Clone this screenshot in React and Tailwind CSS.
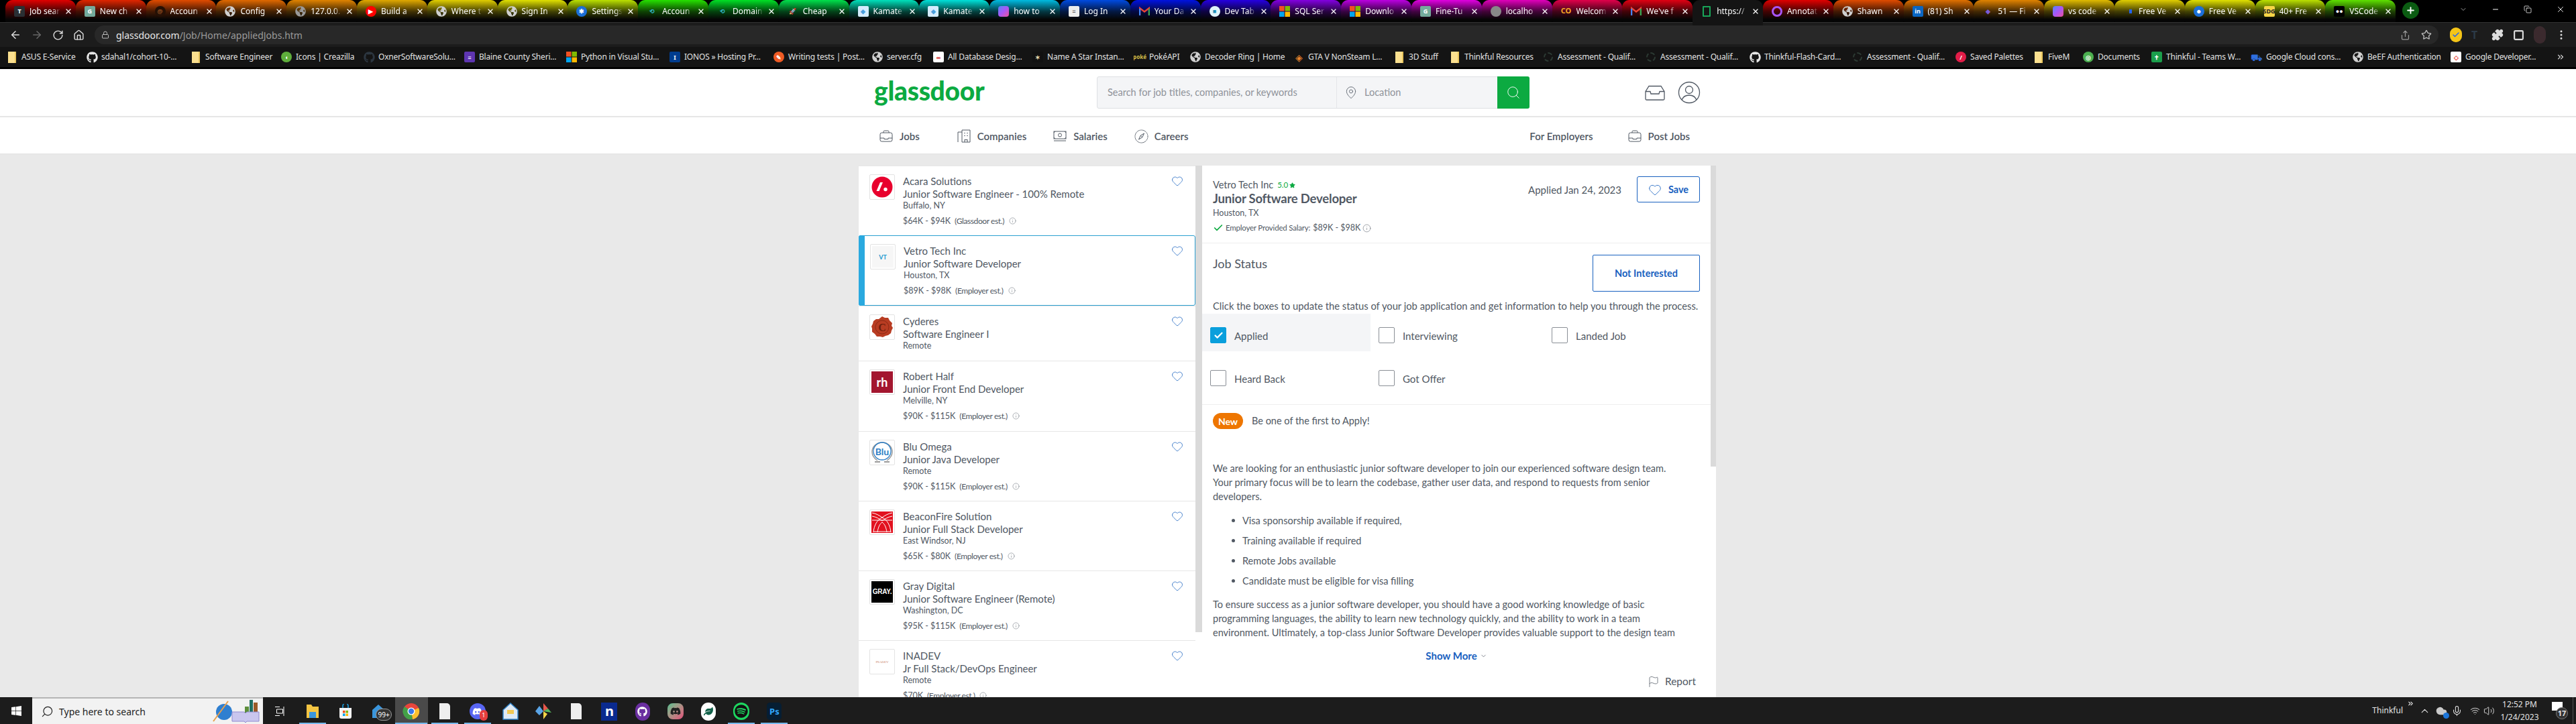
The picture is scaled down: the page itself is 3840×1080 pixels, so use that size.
import React from "react";
import { ArrowLeft, ArrowRight, RotateCw, House, Lock, Star, Share, Puzzle, EllipsisVertical, Search, MapPin, Heart, Info, Check, ChevronDown, ChevronUp, Flag, Mic, Wifi, Volume2, Plus, Minus, X, Copy, ChevronsRight, Square, Cloud } from "lucide-react";
import { FaGithub, FaGlobeAmericas, FaWindows, FaDiscord, FaSpotify, FaLeaf } from "react-icons/fa";

const Ms = () => (
  <svg width="16" height="16" viewBox="0 0 16 16"><rect width="7.5" height="7.5" fill="#f25022" /><rect x="8.5" width="7.5" height="7.5" fill="#7fba00" /><rect y="8.5" width="7.5" height="7.5" fill="#00a4ef" /><rect x="8.5" y="8.5" width="7.5" height="7.5" fill="#ffb900" /></svg>
);
const Gmail = () => (
  <svg width="16" height="16" viewBox="0 0 16 16"><path d="M1 14V3l7 5.5L15 3v11" fill="none" stroke="#ea4335" strokeWidth="2.4" /><path d="M1 14V4" stroke="#4285f4" strokeWidth="2.4" /><path d="M15 14V4" stroke="#34a853" strokeWidth="2.4" /></svg>
);
const Disk = ({ c, t, tc = "#fff" }) => (
  <span className="flex items-center justify-center w-[16px] h-[16px] rounded-full text-[9px] font-bold leading-none" style={{ background: c, color: tc }}>{t}</span>
);
const Sq = ({ c, t, tc = "#fff" }) => (
  <span className="flex items-center justify-center w-[16px] h-[16px] rounded-[2px] text-[9px] font-bold leading-none" style={{ background: c, color: tc }}>{t}</span>
);
const Globe = () => <FaGlobeAmericas size={16} color="#cfcfcf" />;
const Folder = () => <span className="block w-[12px] h-[17px] bg-[#fbe08f] border-r-2 border-[#e8c45c]" />;
const Git = () => <FaGithub size={17} color="#e6e6e6" />;
const Dim = () => <span className="block w-[14px] h-[14px] rounded-full border-2 border-dashed border-[#2c3a33]" />;
const Grad = () => <span className="block w-[16px] h-[16px] rounded-[4px] bg-gradient-to-br from-[#3b82f6] via-[#a855f7] to-[#ec4899]" />;

const tabs = [
  ["Job sear", 0, <Sq c="#2a2f33" t="T" />], ["New ch", 10, <Sq c="#74aa9c" t="G" />], ["Accoun", 20, <Disk c="#251005" t="@" tc="#8a4a20" />], ["Config", 28, <Globe />],
  ["127.0.0.", 35, <FaGlobeAmericas size={16} color="#999" />], ["Build a", 45, <Disk c="#ff0000" t="▶" />], ["Where t", 55, <Globe />], ["Sign In", 60, <Globe />],
  ["Settings", 70, <Disk c="#1b6fd8" t="✱" />], ["Accoun", 110, <Disk c="transparent" t="⟲" tc="#35b4c8" />], ["Domain", 130, <Disk c="transparent" t="⟲" tc="#35b4c8" />], ["Cheap", 140, <Disk c="transparent" t="🚀" />],
  ["Kamate", 170, <Sq c="#d4ecff" t="◆" tc="#4a9fdc" />], ["Kamate", 178, <Sq c="#d4ecff" t="◆" tc="#4a9fdc" />], ["how to", 190, <Grad />], ["Log In", 220, <Sq c="#eee" t="≡" tc="#555" />],
  ["Your Da", 235, <Gmail />], ["Dev Tab", 250, <Disk c="#dff4fb" t="■" tc="#1d8fb8" />], ["SQL Ser", 275, <Ms />], ["Downlo", 290, <Ms />],
  ["Fine-Tu", 300, <Sq c="#74aa9c" t="G" />], ["localho", 310, <Disk c="#888" t="" />], ["Welcom", 340, <span className="text-[11px] font-bold text-[#f9a825]">CO</span>], ["We've f", 355, <Gmail />],
  ["https://", null, <span className="block w-[12px] h-[16px] border-2 border-[#18a558] rounded-[1px]" />],
  ["Annotat", 0, <span className="block w-[16px] h-[16px] rounded-full border-[3px] border-[#a855f7]" />], ["Shawn", 20, <Globe />], ["(81) Sh", 30, <Sq c="#0a66c2" t="in" />], ["51 — Fi", 35, <Disk c="transparent" t="◆" tc="#7c5cd6" />],
  ["vs code", 50, <Grad />], ["Free Ve", 55, <span className="block w-[4px] h-[6px] bg-[#2563eb] ml-[6px]" />], ["Free Ve", 60, <Disk c="#1b6fd8" t="☻" />], ["40+ Fre", 70, <Sq c="#f5d547" t="SDG" tc="#222" />], ["VSCode", 95, <Sq c="#000" t="●●" />],
];

const bookmarks = [
  ["ASUS E-Service", 119, <Folder />], ["sdahal1/cohort-10-...", 155, <Git />], ["Software Engineer", 135, <Folder />], ["Icons | Creazilla", 123, <Disk c="#5fae3c" t="◖" />],
  ["OxnerSoftwareSolu...", 150, <FaGithub size={17} color="#2c3640" />], ["Blaine County Sheri...", 152, <Sq c="#5e35b1" t="≡" />], ["Python in Visual Stu...", 154, <Ms />], ["IONOS » Hosting Pr...", 155, <Sq c="#003d8f" t="I" />],
  ["Writing tests | Post...", 147, <Disk c="#ef5b25" t="✎" />], ["server.cfg", 91, <Globe />], ["All Database Desig...", 148, <Sq c="#fff" t="∞" tc="#c00" />], ["Name A Star Instan...", 152, <Sq c="#111" t="✶" tc="#e8dcb0" />],
  ["PokéAPI", 83, <span className="text-[8px] font-bold text-[#d6c04a]">poké</span>], ["Decoder Ring | Home", 154, <Globe />], ["GTA V NonSteam L...", 150, <span className="text-[14px] text-[#e8842c]">◈</span>], ["3D Stuff", 83, <Folder />],
  ["Thinkful Resources", 139, <Folder />], ["Assessment - Qualif...", 153, <Dim />], ["Assessment - Qualif...", 155, <Dim />], ["Thinkful-Flash-Card...", 153, <Git />],
  ["Assessment - Qualif...", 154, <Dim />], ["Saved Palettes", 116, <Disk c="#e11d48" t="/" />], ["FiveM", 74, <Folder />], ["Documents", 102, <Disk c="#4caf50" t="◎" />],
  ["Thinkful - Teams W...", 149, <Sq c="#1b9e4b" t="✝" />], ["Google Cloud cons...", 151, <span className="text-[14px] text-[#2f6fe0]">⛟</span>], ["BeEF Authentication", 146, <Globe />], ["Google Developer...", 140, <Sq c="#fff" t="◇" tc="#ea4335" />],
];

const IconStroke = { fill: "none", stroke: "#505863", strokeWidth: 1 };

const JobsIcon = () => (
  <svg width="20" height="20" viewBox="0 0 20 20" {...IconStroke}><rect x="1" y="5" width="18" height="13" rx="2.5" /><path d="M6 5V3.5A1.5 1.5 0 0 1 7.5 2h5A1.5 1.5 0 0 1 14 3.500V5M1 13h6v1.500h6V13h6" /></svg>
);
const CompaniesIcon = () => (
  <svg width="21" height="20" viewBox="0 0 21 20" {...IconStroke}><path d="M7 4H1v15M7 1h12v18H7zM11 16v3M15 16v3M10.500 15.500h5" /><path d="M11 5v1M15 5v1M11 9v1M15 9v1" strokeWidth="1.600" /></svg>
);
const SalariesIcon = () => (
  <svg width="20" height="18" viewBox="0 0 20 18" {...IconStroke}><rect x="1" y="2" width="18" height="11" /><circle cx="10" cy="7.500" r="2.500" /><path d="M1 16h18M3 2 1 4M17 2l2 2M1 11l2 2M19 11l-2 2" /></svg>
);
const CareersIcon = () => (
  <svg width="21" height="21" viewBox="0 0 21 21" {...IconStroke}><circle cx="10.500" cy="10.500" r="9.500" strokeDasharray="1.800 .5" /><path d="M14.500 6 11.800 11.800 6.500 15 9.200 9.200zM9.200 9.200l2.600 2.600" /></svg>
);

const jobs = [
  { co: "Acara Solutions", t: "Junior Software Engineer - 100% Remote", loc: "Buffalo, NY", sal: "$64K - $94K", est: "(Glassdoor est.)", h: "h-[104px]", logo: (
    <svg width="32" height="32" viewBox="0 0 32 32"><circle cx="16" cy="16" r="15.500" fill="#e8002d" /><path d="M7.500 22 13 9h4l-5.500 13z" fill="#fff" /><circle cx="21" cy="19.500" r="2.700" fill="#fff" /></svg>
  ) },
  { co: "Vetro Tech Inc", t: "Junior Software Developer", loc: "Houston, TX", sal: "$89K - $98K", est: "(Employer est.)", sel: true, h: "h-[105px]", logo: (
    <span className="flex flex-col items-center justify-center w-[32px] h-[32px] bg-[#f6f6f6]"><span className="text-[9px] leading-none font-bold text-[#1d9ad0]">VT</span></span>
  ) },
  { co: "Cyderes", t: "Software Engineer I", loc: "Remote", h: "h-[82px]", logo: (
    <svg width="32" height="32" viewBox="0 0 32 32"><path d="M16 0l4 2 5 0 2 4 4 4-1 4 2 3-2 4-1 4-4 3-4 1-4 2-4-1-5 0-3-4-4-3 0-5-1-3 2-4 1-4 4-3 4 0z" fill="#b83c22" /><circle cx="16" cy="16" r="10" fill="none" stroke="#8e2a14" strokeWidth="1" /><text x="16" y="22" textAnchor="middle" fontSize="16" fontWeight="700" fill="#6e1e0c" fontFamily="Liberation Serif, serif">C</text></svg>
  ) },
  { co: "Robert Half", t: "Junior Front End Developer", loc: "Melville, NY", sal: "$90K - $115K", est: "(Employer est.)", h: "h-[105px]", logo: (
    <span className="flex items-center justify-center w-[32px] h-[32px] bg-[#a3162f] text-white text-[18px] font-bold leading-none">rh</span>
  ) },
  { co: "Blu Omega", t: "Junior Java Developer", loc: "Remote", sal: "$90K - $115K", est: "(Employer est.)", h: "h-[104px]", logo: (
    <svg width="32" height="32" viewBox="0 0 32 32"><path d="M9 28C3 24 1 19 1 15a15 14 0 0 1 30 0c0 4-2 9-8 13" fill="none" stroke="#9a9a9a" strokeWidth="1.500" /><path d="M5 30h8M19 30h8" stroke="#9a9a9a" strokeWidth="2" /><circle cx="16" cy="14" r="13" fill="none" stroke="#2d7fc6" strokeWidth="1.300" /><text x="16" y="20" textAnchor="middle" fontSize="14" fontWeight="700" fill="#2d7fc6" fontFamily="Lato, sans-serif">Blu</text></svg>
  ) },
  { co: "BeaconFire Solution", t: "Junior Full Stack Developer", loc: "East Windsor, NJ", sal: "$65K - $80K", est: "(Employer est.)", h: "h-[104px]", logo: (
    <svg width="32" height="32" viewBox="0 0 32 32"><rect width="32" height="32" fill="#e2121f" /><path d="M1 2c6 1 11 4 15 7 4-3 9-6 15-7M1 7c6 1 11 4 15 7 4-3 9-6 15-7M1 13h30M3 31C4 20 9 12 16 9c7 3 12 11 13 22M9 31c1-7 3-12 7-15 4 3 6 8 7 15M3 30h26" fill="none" stroke="#fff" strokeWidth="1" /></svg>
  ) },
  { co: "Gray Digital", t: "Junior Software Engineer (Remote)", loc: "Washington, DC", sal: "$95K - $115K", est: "(Employer est.)", h: "h-[104px]", logo: (
    <span className="flex items-center justify-center w-[32px] h-[32px] bg-black text-white text-[10px] font-black leading-none font-['Liberation_Sans',sans-serif] tracking-tight">GRAY.</span>
  ) },
  { co: "INADEV", t: "Jr Full Stack/DevOps Engineer", loc: "Remote", sal: "$70K", est: "(Employer est.)", h: "h-[104px]", logo: (
    <span className="flex items-center justify-center w-[32px] h-[32px] bg-white text-[#c9806a] text-[5px] leading-none font-['Liberation_Serif',serif]">INADEV</span>
  ) },
];

function JobCard({ j }) {
  return (
    <div className={`relative flex shrink-0 ${j.h} ${j.sel ? "border border-[#2b9fd0] rounded-[3px] pl-[16px] pr-[17px]" : "border-t border-[#e6e6e6] pl-[16px] pr-[18px]"}`}>
      {j.sel && <span className="absolute left-[-1px] top-[-1px] bottom-[-1px] w-[9px] bg-[#2aa9df] rounded-l-[3px]" />}
      <div className="flex w-full pt-[12px]">
        <div className="w-[38px] h-[38px] shrink-0 border border-[#e3e3e3] rounded-[2px] flex items-center justify-center bg-white">{j.logo}</div>
        <div className="ml-[12px] flex-1 pt-[1px] text-[#505863]">
          <div className="text-[15px] leading-[19px] whitespace-nowrap">{j.co}</div>
          <div className="text-[15px] leading-[19px] whitespace-nowrap">{j.t}</div>
          <div className="text-[12.500px] leading-[16px] whitespace-nowrap">{j.loc}</div>
          {j.sal && (
            <div className="flex items-center mt-[6px] text-[12.500px] leading-[17px] whitespace-nowrap">
              <span>{j.sal}</span>
              <span className="ml-[6px] text-[12px] tracking-[-0.4px]">{j.est}</span>
              <Info size={11} strokeWidth={1} className="ml-[7px]" />
            </div>
          )}
        </div>
        <Heart size={18} strokeWidth={1} color="#1861bf" className="shrink-0 mt-[1px]" />
      </div>
    </div>
  );
}

const Box = ({ on, label }) => (
  <div className="flex items-start pl-[12px] pt-[20px] gap-[12px]">
    <span className={`flex items-center justify-center w-[24px] h-[24px] rounded-[2px] border ${on ? "bg-[#0a9fdc] border-[#0a9fdc]" : "bg-white border-[#8a8f96]"}`}>
      {on && <Check size={15} strokeWidth={3.500} color="#fff" />}
    </span>
    <span className="text-[15px] leading-[26px] text-[#505863]">{label}</span>
  </div>
);

const Bullet = ({ children }) => (
  <li className="flex items-center h-[21px] pl-[28px]">
    <span className="w-[5px] h-[5px] rounded-full bg-[#505863] mr-[11px]" />
    {children}
  </li>
);

function Tab({ t }) {
  const [text, hue, icon] = t;
  const active = hue === null;
  return (
    <div
      className={`relative flex items-center shrink-0 w-[104.800px] rounded-t-[11px] ${active ? "h-[38px] rounded-b-none bg-[#141414] pb-[5px]" : "h-[33px] rounded-b-[2px]"}`}
      style={active ? undefined : { background: `linear-gradient(to bottom, hsl(${hue} 100% 44%) 0px, hsl(${hue} 90% 14%) 17px, #050505 29px)` }}
    >
      <span className="w-[36px] flex items-center justify-center shrink-0 pl-[6px]">{icon}</span>
      <span className="w-[46px] overflow-hidden whitespace-nowrap text-[12px] text-white [mask-image:linear-gradient(90deg,#000_75%,transparent)]">{text}</span>
      <X size={12} strokeWidth={2.500} color="#fff" className="ml-[6px]" />
    </div>
  );
}

const BarIcon = ({ active, under, children }) => (
  <div className={`flex flex-col items-center justify-between w-[49.200px] h-full pt-[8px] ${active ? "bg-[#4a4a4a]" : ""}`}>
    <span className="flex items-center justify-center h-[26px]">{children}</span>
    <span className={`h-[2px] ${active ? "w-[48px]" : "w-[40px]"} ${under || active ? "bg-[#76b9ed]" : ""}`} />
  </div>
);

export default function App() {
  return (
    <div className="flex flex-col w-[3840px] h-[1080px] overflow-hidden bg-[#e9e9e9] font-['Lato',sans-serif]">
      {/* browser chrome */}
      <div className="flex items-start h-[34px] bg-black pl-[8px] border-b border-[#333] font-['Noto_Sans',sans-serif] shrink-0">
        {tabs.map((t, i) => <Tab key={i} t={t} />)}
        <span className="flex items-center justify-center w-[25px] h-[25px] ml-[10px] mt-[3px] rounded-full bg-[#0b5c12] shrink-0"><Plus size={15} strokeWidth={3} color="#fff" /></span>
        <div className="flex items-center ml-auto h-[28px] pr-[16px] gap-[36px] text-white">
          <ChevronDown size={12} strokeWidth={1.500} color="#ccc" />
          <Minus size={12} strokeWidth={2} />
          <Copy size={12} strokeWidth={1.500} />
          <X size={14} strokeWidth={1.500} />
        </div>
      </div>
      <div className="flex items-center h-[36px] bg-[#1c1c1c] shrink-0 font-['Noto_Sans',sans-serif]">
        <div className="flex items-center w-[141px] pl-[14px] gap-[14px]">
          <ArrowLeft size={18} color="#ddd" />
          <ArrowRight size={18} color="#666" />
          <RotateCw size={17} color="#ddd" />
          <House size={17} color="#ddd" />
        </div>
        <div className="flex items-center w-[3494px] h-[28px] rounded-full bg-[#282828] pl-[10px] pr-[10px]">
          <Lock size={12} color="#bbb" />
          <span className="ml-[10px] text-[14px] text-[#e8e8e8]">glassdoor.com<span className="text-[#9a9a9a]">/Job/Home/appliedJobs.htm</span></span>
          <Share size={15} color="#999" className="ml-auto" />
          <Star size={16} color="#bbb" className="ml-[16px]" />
        </div>
        <div className="flex items-center ml-[17px] gap-[14px]">
          <span className="flex items-center justify-center w-[18px] h-[22px] rounded-full bg-[#f5c518]"><Check size={12} strokeWidth={3} color="#2563eb" /></span>
          <span className="text-[16px] font-bold text-[#2c3a48] w-[16px]">T</span>
          <Puzzle size={18} color="#ddd" fill="#ddd" />
          <Square size={17} strokeWidth={3} color="#ddd" />
          <span className="w-[18px] h-[26px] rounded-full bg-[#3b2a2e]" />
          <EllipsisVertical size={18} color="#ddd" />
        </div>
      </div>
      <div className="flex items-center h-[33px] bg-[#141414] pl-[9px] shrink-0 font-['Noto_Sans',sans-serif] border-b-[3px] border-black">
        {bookmarks.map(([n, w, ic], i) => (
          <div key={i} className="flex items-center shrink-0 overflow-hidden" style={{ width: w }}>
            <span className="w-[18px] flex items-center justify-center shrink-0">{ic}</span>
            <span className="ml-[5px] text-[12px] text-[#e2e2e2] whitespace-nowrap tracking-[-0.2px]">{n}</span>
          </div>
        ))}
        <ChevronsRight size={14} color="#ddd" className="ml-[18px]" />
      </div>

      {/* glassdoor header */}
      <div className="h-[72px] bg-white border-b-2 border-[#e6e6e6] shrink-0">
        <div className="flex items-center w-[1280px] mx-auto h-full pl-[23px]">
          <span className="w-[332px] text-[39px] font-black text-[#0caa41] leading-none tracking-[-0.3px] pb-[6px]">glassdoor</span>
          <div className="flex h-[48px] w-[645px] bg-[#f4f5f7] border border-[#dee0e3] rounded-[3px]">
            <div className="flex items-center w-[357px] pl-[15px] border-r border-[#e4e6e9] text-[14.500px] text-[#8e9299]">Search for job titles, companies, or keywords</div>
            <div className="flex items-center flex-1 pl-[11px] text-[14.500px] text-[#8e9299]">
              <MapPin size={20} strokeWidth={1} color="#505863" />
              <span className="ml-[10px]">Location</span>
            </div>
            <span className="flex items-center justify-center w-[48px] -my-[1px] -mr-[1px] bg-[#0caa41] rounded-r-[3px]"><Search size={22} strokeWidth={1} color="#fff" /></span>
          </div>
          <svg width="32" height="32" viewBox="0 0 32 32" fill="none" stroke="#505863" strokeWidth="1.300" className="ml-[171px]"><path d="M7 6.500h18l5 8v11a1.500 1.500 0 0 1-1.500 1.500h-25A1.500 1.500 0 0 1 2 25.500v-11zM2 14.500h7l1 3.500h12l1-3.500h7" /></svg>
          <svg width="34" height="34" viewBox="0 0 34 34" fill="none" stroke="#505863" strokeWidth="1.300" className="ml-[18px]"><circle cx="17" cy="17" r="15.500" /><circle cx="17" cy="13" r="5.500" /><path d="M6 28c2-5 6-7 11-7s9 2 11 7" /></svg>
        </div>
      </div>
      <div className="h-[55px] bg-white border-b border-[#e2e2e2] shrink-0">
        <div className="flex items-center w-[1280px] mx-auto h-full pl-[31px] pr-[41px] pt-[2px] text-[15px] font-semibold text-[#505863]">
          <JobsIcon /><span className="ml-[10px]">Jobs</span>
          <span className="ml-[56px]"><CompaniesIcon /></span><span className="ml-[9px]">Companies</span>
          <span className="ml-[40px]"><SalariesIcon /></span><span className="ml-[10px]">Salaries</span>
          <span className="ml-[40px]"><CareersIcon /></span><span className="ml-[9px]">Careers</span>
          <span className="ml-auto">For Employers</span>
          <span className="ml-[52px]"><JobsIcon /></span><span className="ml-[10px]">Post Jobs</span>
        </div>
      </div>

      {/* page */}
      <div className="flex-1 min-h-0 overflow-hidden pt-[17px]">
        <div className="flex w-[1280px] h-[800px] mx-auto">
          <div className="flex flex-col w-[502px] shrink-0 bg-white overflow-hidden">
            {jobs.map((j) => <JobCard key={j.co} j={j} />)}
          </div>
          <div className="w-[10px] shrink-0 bg-white"><div className="h-[696px] bg-[#dadada]" /></div>
          <div className="flex flex-col w-[758px] shrink-0 bg-white text-[#505863] overflow-hidden">
            <div className="flex justify-between h-[116px] pl-[16px] pr-[16px] border-b border-[#eeeeee] shrink-0">
              <div className="pt-[20px]">
                <div className="flex items-center h-[18px] text-[14.500px]">Vetro Tech Inc <span className="ml-[6px] text-[11.500px] text-[#0caa41]">5.0</span><Star size={9} fill="#0caa41" color="#0caa41" className="ml-[2px]" /></div>
                <div className="text-[18.500px] leading-[22px] font-bold tracking-[-0.2px]">Junior Software Developer</div>
                <div className="mt-[1px] text-[12.500px] leading-[20px]">Houston, TX</div>
                <div className="flex items-center mt-[2px] h-[20px] text-[11.500px]">
                  <Check size={16} strokeWidth={2.500} color="#0caa41" className="mr-[3px]" />
                  <span className="tracking-[-0.2px]">Employer Provided Salary:</span>
                  <span className="ml-[4px] text-[12.500px]">$89K - $98K</span>
                  <Info size={13} strokeWidth={1} className="ml-[3px]" />
                </div>
              </div>
              <div className="flex items-start pt-[16px]">
                <span className="mt-[10px] text-[15px] leading-[20px]">Applied Jan 24, 2023</span>
                <button className="flex items-center justify-center ml-[23px] w-[94px] h-[39px] border border-[#1861bf] rounded-[3px] text-[#1861bf] text-[14.500px] font-bold"><Heart size={20} strokeWidth={1} className="mr-[10px]" />Save</button>
              </div>
            </div>
            <div className="border-b border-[#eeeeee] pb-[15px] shrink-0">
              <div className="flex items-start justify-between pl-[16px] pr-[16px] pt-[17px]">
                <span className="text-[18px] leading-[26px]">Job Status</span>
                <button className="w-[160px] h-[55px] border border-[#1861bf] rounded-[2px] text-[#1861bf] text-[14.500px] font-bold">Not Interested</button>
              </div>
              <p className="mt-[11px] px-[16px] text-[14.750px] leading-[20px] whitespace-nowrap">Click the boxes to update the status of your job application and get information to help you through the process.</p>
              <div className="grid grid-cols-[251px_258px_1fr] gap-y-[8px] mt-[2px]">
                <div className="h-[56px] bg-[#f4f5f7]"><Box on label="Applied" /></div>
                <div className="h-[56px]"><Box label="Interviewing" /></div>
                <div className="h-[56px]"><Box label="Landed Job" /></div>
                <div className="h-[56px]"><Box label="Heard Back" /></div>
                <div className="h-[56px]"><Box label="Got Offer" /></div>
              </div>
            </div>
            <div className="flex items-center pl-[16px] mt-[12px] h-[24px] shrink-0">
              <span className="flex items-center justify-center w-[45px] h-[24px] rounded-full bg-[#ee7600] text-white text-[14px] font-bold">New</span>
              <span className="ml-[13px] text-[14.500px]">Be one of the first to Apply!</span>
            </div>
            <div className="mt-[48px] px-[16px] text-[14.500px] leading-[21px] shrink-0">
              <p className="whitespace-nowrap">We are looking for an enthusiastic junior software developer to join our experienced software design team.<br />Your primary focus will be to learn the codebase, gather user data, and respond to requests from senior<br />developers.</p>
              <ul className="flex flex-col gap-[9px] mt-[15px]">
                <Bullet>Visa sponsorship available if required,</Bullet>
                <Bullet>Training available if required</Bullet>
                <Bullet>Remote Jobs available</Bullet>
                <Bullet>Candidate must be eligible for visa filling</Bullet>
              </ul>
              <p className="mt-[14px] whitespace-nowrap">To ensure success as a junior software developer, you should have a good working knowledge of basic<br />programming languages, the ability to learn new technology quickly, and the ability to work in a team<br />environment. Ultimately, a top-class Junior Software Developer provides valuable support to the design team</p>
            </div>
            <div className="flex items-center justify-center h-[20px] mt-[14px] text-[15px] font-bold text-[#1861bf] shrink-0">Show More<ChevronDown size={11} strokeWidth={1.500} color="#505863" className="ml-[4px]" /></div>
            <div className="flex items-center justify-end h-[24px] mt-[17px] pr-[22px] text-[15.500px] shrink-0"><Flag size={18} strokeWidth={1} className="mr-[8px]" />Report</div>
          </div>
          <div className="w-[8px] shrink-0 bg-white"><div className="h-[449px] bg-[#dadada]" /></div>
        </div>
      </div>

      {/* taskbar */}
      <div className="flex items-stretch h-[40px] bg-[#1c1c1c] shrink-0 font-['Noto_Sans',sans-serif] text-white">
        <div className="flex items-center justify-center w-[48px]"><FaWindows size={17} color="#fff" /></div>
        <div className="flex items-center w-[344px] bg-[#f2f2f2] border-t-2 border-[#b5b5b5] pl-[13px] overflow-hidden">
          <Search size={19} strokeWidth={1.500} color="#222" className="-scale-x-100" />
          <span className="ml-[8px] text-[14px] text-[#222]">Type here to search</span>
          <svg width="76" height="38" viewBox="0 0 76 38" className="ml-auto">
            <rect x="56" y="2" width="5" height="26" fill="#1f6f63" /><rect x="62" y="6" width="6" height="22" fill="#9a5a28" /><rect x="49" y="12" width="6" height="16" fill="#5d8f3c" />
            <circle cx="18" cy="20" r="12" fill="#2f7fd0" /><path d="M2 34 24 4" stroke="#e8a04c" strokeWidth="2" />
            <path d="M30 20h18l2 2 2-2h18v14H52l-2 2-2-2H30z" fill="#c9c6ee" stroke="#8f8ad0" />
          </svg>
        </div>
        <BarIcon><svg width="16" height="16" viewBox="0 0 16 16" fill="none" stroke="#fff"><path d="M1 1.500h7M1 14.500h7M3.500 5h9v6h-9zM14 1v14" /></svg></BarIcon>
        <BarIcon under><svg width="20" height="22" viewBox="0 0 20 22"><path d="M1 1h7l2 3h9v17H1z" fill="#f4c542" /><rect x="5" y="12" width="10" height="9" fill="#3a96dd" /></svg></BarIcon>
        <BarIcon><svg width="20" height="22" viewBox="0 0 20 22"><path d="M1 6h18v13a3 3 0 0 1-3 3H4a3 3 0 0 1-3-3z" fill="#f5f5f5" /><path d="M6 6V3a4 4 0 0 1 8 0v3" fill="none" stroke="#1aa7ec" strokeWidth="1.500" /><rect x="6" y="10" width="3.500" height="3.500" fill="#f25022" /><rect x="10.500" y="10" width="3.500" height="3.500" fill="#7fba00" /><rect x="6" y="14.500" width="3.500" height="3.500" fill="#00a4ef" /><rect x="10.500" y="14.500" width="3.500" height="3.500" fill="#ffb900" /></svg></BarIcon>
        <BarIcon><span className="relative flex"><svg width="24" height="24" viewBox="0 0 24 24"><path d="M3 10 12 2l9 8v12H3z" fill="#3a96dd" /></svg><span className="absolute -right-[8px] top-[8px] flex items-center justify-center w-[24px] h-[18px] rounded-full bg-[#333] border border-[#999] text-[10px]">99+</span></span></BarIcon>
        <BarIcon active><svg width="26" height="26" viewBox="0 0 26 26"><circle cx="13" cy="13" r="12" fill="#e8453c" /><path d="M13 13 24 8a12 12 0 0 1-9 17z" fill="#fbc02d" /><path d="M13 13 15 25A12 12 0 0 1 3 6z" fill="#43a047" /><circle cx="13" cy="13" r="5.500" fill="#fff" /><circle cx="13" cy="13" r="4.200" fill="#3b78e7" /></svg></BarIcon>
        <BarIcon under><span className="block w-[16px] h-[24px] bg-[#eeeeee] rounded-tr-[5px]" /></BarIcon>
        <BarIcon under><span className="relative flex"><span className="flex items-center justify-center w-[24px] h-[24px] rounded-full bg-[#5865f2]"><FaDiscord size={15} color="#fff" /></span><span className="absolute -right-[3px] top-[10px] flex items-center justify-center w-[12px] h-[16px] rounded-full bg-[#e53e3e] text-[9px]">1</span></span></BarIcon>
        <BarIcon><svg width="26" height="26" viewBox="0 0 26 26" fill="#dfeaf5" stroke="#2f81c7" strokeWidth="1.500"><path d="M13 1 24 11v14H2V11z" /><rect x="8" y="11" width="10" height="6" fill="#f3c955" stroke="none" /></svg></BarIcon>
        <BarIcon><svg width="26" height="26" viewBox="0 0 26 26"><path d="M13 1 20 9 13 13z" fill="#e8574c" /><path d="M20 9 25 15 13 13z" fill="#57b65b" /><path d="M13 25 19 17 13 13z" fill="#f5d547" /><path d="M1 13 7 5 13 13 7 19z" fill="#5aa4e6" /></svg></BarIcon>
        <BarIcon><span className="block w-[16px] h-[24px] bg-[#eeeeee] rounded-tr-[5px]" /></BarIcon>
        <BarIcon><span className="flex items-center justify-center w-[24px] h-[27px] bg-[#0a2a8f] text-white text-[20px] font-bold leading-none">n</span></BarIcon>
        <BarIcon><span className="flex items-center justify-center w-[22px] h-[27px] rounded-full bg-[#6a2fa0]"><FaGithub size={15} color="#fff" /></span></BarIcon>
        <BarIcon><span className="flex items-center justify-center w-[24px] h-[24px] rounded-[8px] bg-gradient-to-br from-[#3fbf8f] to-[#e0487a]"><FaDiscord size={16} color="#222" /></span></BarIcon>
        <BarIcon><span className="flex items-center justify-center w-[22px] h-[27px] rounded-full bg-white"><FaLeaf size={14} color="#116149" /></span></BarIcon>
        <BarIcon under><span className="flex items-center justify-center w-[24px] h-[26px] rounded-full bg-[#1ed760]"><FaSpotify size={20} color="#111" /></span></BarIcon>
        <BarIcon under><span className="flex items-center justify-center w-[22px] h-[26px] rounded-[5px] bg-[#061e33] text-[#31a8ff] text-[13px] font-bold leading-none">Ps</span></BarIcon>

        <div className="flex items-center ml-auto pr-[4px] text-[#e4e4e4]">
          <span className="text-[12px]">Thinkful</span>
          <ChevronsRight size={11} strokeWidth={2.500} className="ml-[6px] -mt-[22px]" />
          <ChevronUp size={17} strokeWidth={1.500} className="ml-[7px]" />
          <span className="relative ml-[8px] flex"><Cloud size={17} fill="#c9c9c9" color="#c9c9c9" /><span className="absolute -right-[3px] bottom-[-3px] w-[9px] h-[9px] rounded-full bg-[#1c75d8]" /></span>
          <Mic size={17} strokeWidth={1.500} className="ml-[6px]" />
          <Wifi size={15} strokeWidth={1.500} className="ml-[11px]" />
          <Volume2 size={17} strokeWidth={1.300} className="ml-[5px]" />
          <div className="flex flex-col items-center ml-[10px] w-[54px] text-[12px] leading-[19px] whitespace-nowrap"><span>12:52 PM</span><span>1/24/2023</span></div>
          <span className="relative ml-[21px] flex w-[18px] h-[30px] items-start pt-[2px]">
            <span className="block w-[16px] h-[13px] bg-white" />
            <span className="absolute left-[6px] top-[10px] flex items-center justify-center w-[18px] h-[18px] rounded-full bg-[#333] border border-[#777] text-[11px] font-bold">17</span>
          </span>
          <span className="ml-[13px] w-px h-full bg-[#555]" />
        </div>
      </div>
    </div>
  );
}
